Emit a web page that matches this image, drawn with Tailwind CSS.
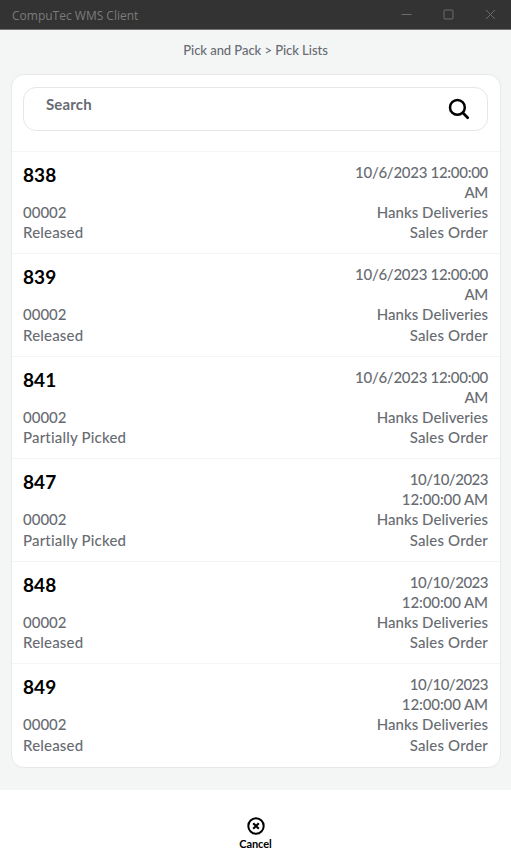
<!DOCTYPE html>
<html lang="en">
<head>
<meta charset="utf-8">
<title>CompuTec WMS Client</title>
<script src="https://cdn.jsdelivr.net/npm/@tailwindcss/browser@4"></script>
</head>
<body class="w-[511px] h-[863px] overflow-hidden flex flex-col bg-[#f4f6f6] font-['Lato',sans-serif] text-[#686c72] [font-variant-ligatures:none]">
<header class="h-[30px] shrink-0 bg-[#333333] border-b border-[#777171] flex items-center justify-between pl-[12px] pr-[15px]">
  <span class="font-['Open_Sans',sans-serif] text-[12px] leading-[16px] text-[#7b7b7b] mt-[3px]">CompuTec WMS Client</span>
  <span class="flex items-center gap-[31px] text-[#6c6c6c]">
    <svg class="w-[11px] h-[11px]" viewBox="0 0 11 11" fill="none" stroke="currentColor"><path d="M.5 5.5h10"/></svg>
    <svg class="w-[11px] h-[11px]" viewBox="0 0 11 11" fill="none" stroke="currentColor"><rect x="1" y="1" width="9" height="9" rx="1"/></svg>
    <svg class="w-[11px] h-[11px]" viewBox="0 0 11 11" fill="none" stroke="currentColor"><path d="M1 1l9 9M10 1L1 10"/></svg>
  </span>
</header>
<nav class="h-[44px] shrink-0 pt-[10px] text-center text-[13px] leading-[20px] font-medium tracking-[-0.05px]">Pick and Pack &gt; Pick Lists</nav>
<main class="mx-[10.5px] h-[694px] shrink-0 bg-white border border-[#e7e9e9] rounded-[13px] flex flex-col">
  <div class="h-[75.8px] shrink-0 px-[11.5px] pt-[12px]">
    <div class="h-[44px] border border-[#e5e7e7] rounded-[13px] flex justify-between pl-[22px] pr-[17px]">
      <span class="text-[15px] leading-[20px] font-bold tracking-[0.15px] mt-[6px]">Search</span>
      <svg class="w-[22px] h-[22px] mt-[10px] text-black" viewBox="0 0 22 22" fill="none" stroke="currentColor" stroke-width="2.5" stroke-linecap="round"><circle cx="9.4" cy="9.4" r="7.4"/><path d="M14.8 14.8l4.9 4.9" stroke-width="2.7"/></svg>
    </div>
  </div>
  <div id="rows"></div>
</main>
<footer class="mt-[22px] flex-1 bg-white flex flex-col items-center pt-[26px] text-black">
  <svg class="w-[20px] h-[20px]" viewBox="0 0 20 20" fill="none" stroke="currentColor" stroke-width="2"><circle cx="10" cy="10" r="7.7"/><path d="M7.2 7.2l5.6 5.6M12.8 7.2l-5.6 5.6" stroke-width="2.2"/></svg>
  <span class="text-[11px] leading-[14px] font-bold tracking-[-0.1px] mt-[1px]">Cancel</span>
</footer>
<script>
const early = '<p class="tracking-[-0.29px] leading-[20px]">10/6/2023 12:00:00</p><p class="tracking-[-0.3px] leading-[20px]">AM</p>';
const late = '<p class="tracking-[-0.5px] leading-[20px]">10/10/2023</p><p class="tracking-[-0.1px] leading-[20px]">12:00:00 AM</p>';
const lists = [['838','Released',early],['839','Released',early],['841','Partially Picked',early],['847','Partially Picked',late],['848','Released',late],['849','Released',late]];
document.getElementById('rows').innerHTML = lists.map(([id, status, date]) => `
<article class="h-[102.5px] border-t border-[#f3f4f4] px-[11.5px] pt-[10px] flex justify-between text-[15px] leading-[20.2px] font-medium">
  <div><h2 class="text-[19px] leading-[26.4px] font-bold text-black tracking-[0.1px] h-[40.2px]">${id}</h2><p>00002</p><p class="tracking-[0.18px]">${status}</p></div>
  <div class="text-right">${date}<p class="tracking-[0.03px]">Hanks Deliveries</p><p class="tracking-[0.18px]">Sales Order</p></div>
</article>`).join('');
</script>
</body>
</html>
